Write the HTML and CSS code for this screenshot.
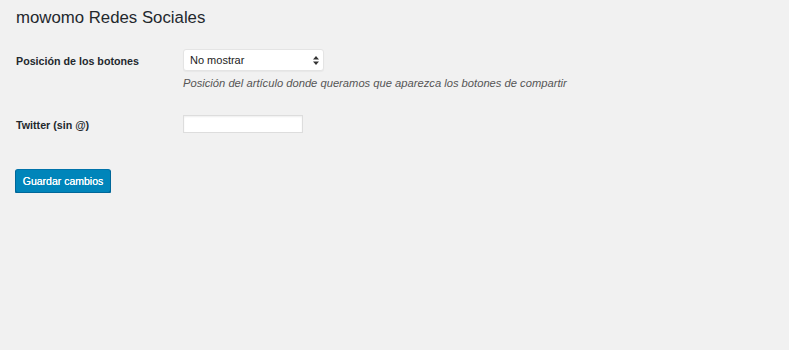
FILE: index.html
```html
<!DOCTYPE html>
<html lang="es">
<head>
    <meta charset="UTF-8">
    <title>mowomo Redes Sociales</title>
    <link rel="stylesheet" href="styles.css">
</head>
<body>
<div class="wrap">
    <h1>mowomo Redes Sociales</h1>
    <form class="settings">
        <div class="field">
            <label class="field-label" for="pos">Posición de los botones</label>
            <div class="field-body">
                <span class="select-box">
                    <select id="pos">
                        <option>No mostrar</option>
                        <option>Arriba</option>
                        <option>Abajo</option>
                    </select>
                    <svg class="select-arrows" width="6" height="9" viewBox="0 0 6 9">
                        <path d="M3 0 L6 3.5 L0 3.5 Z M3 9 L6 5.5 L0 5.5 Z" fill="#333"/>
                    </svg>
                </span>
                <p class="description">Posición del artículo donde queramos que aparezca los botones de compartir</p>
            </div>
        </div>
        <div class="field field-twitter">
            <label class="field-label" for="tw">Twitter (sin @)</label>
            <div class="field-body">
                <input type="text" id="tw" class="text-input">
            </div>
        </div>
        <p class="submit">
            <button type="button" class="button-primary">Guardar cambios</button>
        </p>
    </form>
</div>
</body>
</html>
```

FILE: styles.css
```css
html, body {
    margin: 0;
    background: #f1f1f1;
}
body {
    color: #23282d;
    font-family: "Liberation Sans", Arial, sans-serif;
    font-size: 11px;
}
.wrap {
    padding: 8px 16px 0;
}
h1 {
    margin: 0;
    font-size: 16.8px;
    font-weight: normal;
    line-height: 20px;
}
.settings {
    margin-top: 21px;
}
.field {
    display: flex;
    align-items: flex-start;
}
.field-label {
    width: 167px;
    font-size: 10.7px;
    font-weight: bold;
    line-height: 22px;
    padding-top: 1px;
}
.field-body p {
    margin: 0;
}
.select-box {
    position: relative;
    display: inline-block;
}
select {
    -webkit-appearance: none;
    appearance: none;
    width: 141px;
    height: 22px;
    margin: 0;
    padding: 0 6px;
    background: #fff;
    border: 1px solid #e4e4e4;
    border-radius: 3px;
    box-shadow: 0 1px 1px rgba(0,0,0,.04);
    color: #222;
    font-family: inherit;
    font-size: 11px;
}
.select-arrows {
    position: absolute;
    right: 5px;
    top: 7px;
}
.description {
    margin-top: 4px !important;
    color: #555;
    font-size: 11.2px;
    font-style: italic;
    line-height: 16px;
}
.field-twitter {
    margin-top: 24px;
}
.field-twitter .field-label {
    line-height: 18px;
}
.text-input {
    width: 120px;
    height: 18px;
    margin: 0;
    padding: 0 4px;
    box-sizing: border-box;
    background: #fff;
    border: 1px solid #ddd;
    box-shadow: inset 0 1px 2px rgba(0,0,0,.07);
}
.submit {
    margin: 35px 0 0 -1px;
}
.button-primary {
    width: 96px;
    height: 24px;
    padding: 0;
    background: #0085ba;
    border: 1px solid #0073aa;
    border-color: #0073aa #006799 #006799;
    border-radius: 3px;
    box-shadow: 0 1px 0 #006799;
    color: #fff;
    font-family: inherit;
    font-size: 10.5px;
    text-shadow: 0 0 0.4px #fff;
    cursor: pointer;
}
```
